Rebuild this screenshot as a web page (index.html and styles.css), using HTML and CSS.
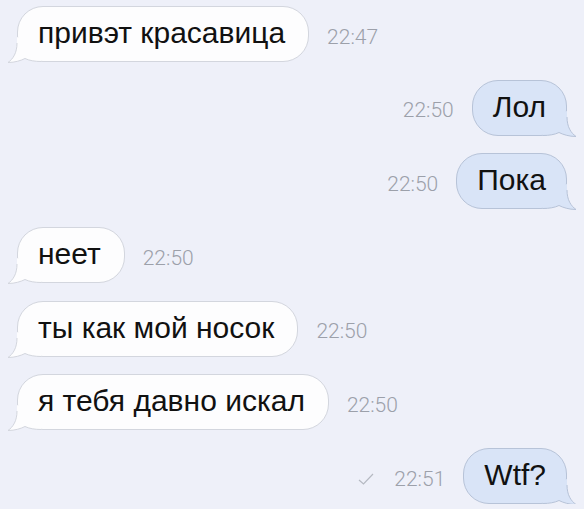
FILE: index.html
```html
<!DOCTYPE html>
<html>
<head>
    <title>Chat</title>
    <link rel="stylesheet" href="styles.css">
</head>
<body>
    <div class="chat">
        <div class="row in">
            <div class="bubble">привэт красавица
                <svg class="tail" viewBox="0 0 40 27" width="40" height="27"><path class="tail-fill" d="M10 0 L10 6 C10 16 6 22 1 25.5 C8 25.5 14 23.5 18 21.5 C22 23.5 28 24.5 34 24.5 L34 10 Z"/><path class="tail-line" d="M10 6 C10 16 6 22 1 25.5 C8 25.5 14 23.5 18 21.5 C22 23.5 28 24.5 34 24.5"/></svg>
            </div>
            <span class="time">22:47</span>
        </div>
        <div class="row out">
            <span class="time">22:50</span>
            <div class="bubble">Лол
                <svg class="tail" viewBox="0 0 40 27" width="40" height="27"><path class="tail-fill" d="M10 0 L10 6 C10 16 6 22 1 25.5 C8 25.5 14 23.5 18 21.5 C22 23.5 28 24.5 34 24.5 L34 10 Z"/><path class="tail-line" d="M10 6 C10 16 6 22 1 25.5 C8 25.5 14 23.5 18 21.5 C22 23.5 28 24.5 34 24.5"/></svg>
            </div>
        </div>
        <div class="row out">
            <span class="time">22:50</span>
            <div class="bubble">Пока
                <svg class="tail" viewBox="0 0 40 27" width="40" height="27"><path class="tail-fill" d="M10 0 L10 6 C10 16 6 22 1 25.5 C8 25.5 14 23.5 18 21.5 C22 23.5 28 24.5 34 24.5 L34 10 Z"/><path class="tail-line" d="M10 6 C10 16 6 22 1 25.5 C8 25.5 14 23.5 18 21.5 C22 23.5 28 24.5 34 24.5"/></svg>
            </div>
        </div>
        <div class="row in">
            <div class="bubble">неет
                <svg class="tail" viewBox="0 0 40 27" width="40" height="27"><path class="tail-fill" d="M10 0 L10 6 C10 16 6 22 1 25.5 C8 25.5 14 23.5 18 21.5 C22 23.5 28 24.5 34 24.5 L34 10 Z"/><path class="tail-line" d="M10 6 C10 16 6 22 1 25.5 C8 25.5 14 23.5 18 21.5 C22 23.5 28 24.5 34 24.5"/></svg>
            </div>
            <span class="time">22:50</span>
        </div>
        <div class="row in">
            <div class="bubble">ты как мой носок
                <svg class="tail" viewBox="0 0 40 27" width="40" height="27"><path class="tail-fill" d="M10 0 L10 6 C10 16 6 22 1 25.5 C8 25.5 14 23.5 18 21.5 C22 23.5 28 24.5 34 24.5 L34 10 Z"/><path class="tail-line" d="M10 6 C10 16 6 22 1 25.5 C8 25.5 14 23.5 18 21.5 C22 23.5 28 24.5 34 24.5"/></svg>
            </div>
            <span class="time">22:50</span>
        </div>
        <div class="row in">
            <div class="bubble">я тебя давно искал
                <svg class="tail" viewBox="0 0 40 27" width="40" height="27"><path class="tail-fill" d="M10 0 L10 6 C10 16 6 22 1 25.5 C8 25.5 14 23.5 18 21.5 C22 23.5 28 24.5 34 24.5 L34 10 Z"/><path class="tail-line" d="M10 6 C10 16 6 22 1 25.5 C8 25.5 14 23.5 18 21.5 C22 23.5 28 24.5 34 24.5"/></svg>
            </div>
            <span class="time">22:50</span>
        </div>
        <div class="row out">
            <svg class="check" viewBox="0 0 16 12" width="16" height="12"><path d="M1 7 L5.5 11 L15 1"/></svg>
            <span class="time">22:51</span>
            <div class="bubble">Wtf?
                <svg class="tail" viewBox="0 0 40 27" width="40" height="27"><path class="tail-fill" d="M10 0 L10 6 C10 16 6 22 1 25.5 C8 25.5 14 23.5 18 21.5 C22 23.5 28 24.5 34 24.5 L34 10 Z"/><path class="tail-line" d="M10 6 C10 16 6 22 1 25.5 C8 25.5 14 23.5 18 21.5 C22 23.5 28 24.5 34 24.5"/></svg>
            </div>
        </div>
    </div>
</body>
</html>
```

FILE: styles.css
```css
body {
    margin: 0;
    background: #eef0f9;
    font-family: 'Liberation Sans', Arial, sans-serif;
}

.chat {
    display: flex;
    flex-direction: column;
    gap: 17.7px;
    padding: 6px 17px 0 17px;
}

.row {
    display: flex;
    align-items: center;
    gap: 18px;
}

.row.out {
    justify-content: flex-end;
}

.bubble {
    position: relative;
    box-sizing: border-box;
    height: 56px;
    padding: 0 23px 2px 20px;
    display: flex;
    align-items: center;
    font-size: 30px;
    color: #111;
    background: #fdfdfe;
    border: 1px solid #d3d6de;
    border-radius: 26px;
}

.out .bubble {
    background: #d9e4f7;
    border-color: #b7c3d8;
    padding: 0 20px 2px 20px;
}

.tail {
    position: absolute;
    left: -11px;
    bottom: -3px;
    overflow: visible;
}

.out .tail {
    left: auto;
    right: -11px;
    transform: scaleX(-1);
}

.tail-fill {
    fill: #fdfdfe;
}

.tail-line {
    fill: none;
    stroke: #d3d6de;
    stroke-width: 1;
}

.out .tail-fill {
    fill: #d9e4f7;
}

.out .tail-line {
    stroke: #b7c3d8;
}

.time {
    font-family: Roboto, 'Liberation Sans', sans-serif;
    font-weight: 300;
    font-size: 21px;
    color: #9ca0aa;
    padding-top: 5px;
}

.check {
    fill: none;
    stroke: #b5b9c2;
    stroke-width: 1.2;
    margin-right: 2px;
    margin-top: 6px;
}
```
